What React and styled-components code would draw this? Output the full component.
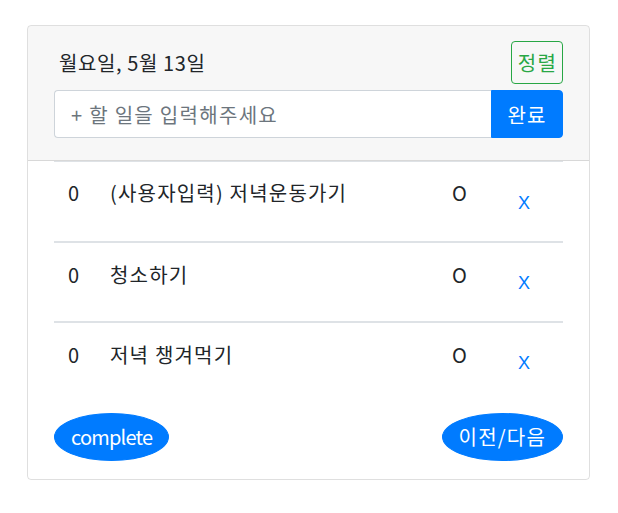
import React from 'react';
import styled, { createGlobalStyle } from 'styled-components';

const GlobalStyle = createGlobalStyle`
  body {
    margin: 0;
    background: #fff;
    font-family: "Noto Sans CJK KR", "Noto Sans", sans-serif;
    color: #212529;
  }
`;

const Page = styled.div`
  padding: 25px 0 0 27px;
`;

const Card = styled.div`
  box-sizing: border-box;
  width: 563px;
  border: 1px solid rgba(0, 0, 0, 0.125);
  border-radius: 4px;
  overflow: hidden;
`;

const Header = styled.div`
  background: rgba(0, 0, 0, 0.03);
  border-bottom: 1px solid rgba(0, 0, 0, 0.125);
  padding: 15px 26px 22px;
`;

const TopRow = styled.div`
  display: flex;
  align-items: center;
  justify-content: space-between;
  height: 43px;
  margin-bottom: 6px;
`;

const DateText = styled.span`
  padding-left: 5px;
  font-size: 20px;
  line-height: 30px;
  letter-spacing: 0.6px;
`;

const SortButton = styled.button`
  box-sizing: border-box;
  height: 43px;
  padding: 0 5px 0 6px;
  background: transparent;
  border: 1px solid #28a745;
  border-radius: 4px;
  color: #28a745;
  font-family: inherit;
  font-size: 20px;
  line-height: 30px;
  letter-spacing: 1.2px;
`;

const InputGroup = styled.div`
  display: flex;
  height: 48px;
`;

const TodoInput = styled.input`
  flex: 1;
  min-width: 0;
  box-sizing: border-box;
  height: 48px;
  padding: 0 16px;
  border: 1px solid #ced4da;
  border-right: none;
  border-radius: 4px 0 0 4px;
  background: #fff;
  font-family: inherit;
  font-size: 20px;
  letter-spacing: 1.3px;
  color: #495057;

  &::placeholder {
    color: #6c757d;
  }
`;

const DoneButton = styled.button`
  box-sizing: border-box;
  width: 72px;
  height: 48px;
  border: 1px solid #007bff;
  border-radius: 0 4px 4px 0;
  background: #007bff;
  color: #fff;
  font-family: inherit;
  font-size: 20px;
  letter-spacing: 1.2px;
`;

const Body = styled.div`
  padding: 0 26px 18px;
`;

const Row = styled.div`
  display: grid;
  grid-template-columns: 56px 342px 66px 1fr;
  box-sizing: border-box;
  height: 80px;
  border-top: 2px solid #dee2e6;
  font-size: 20px;
  line-height: 30px;

  &:first-child {
    border-top-width: 1px;
  }
`;

const Cell = styled.div`
  padding: ${p => (p.$first ? 16 : 17)}px 0 0 ${p => p.$indent || 0}px;
  white-space: nowrap;
  letter-spacing: ${p => (p.$wide ? 1.2 : 0)}px;
`;

const RemoveButton = styled.button`
  align-self: start;
  justify-self: start;
  margin-top: ${p => (p.$first ? 29 : 28)}px;
  padding: 0;
  border: none;
  background: none;
  color: #007bff;
  font-family: "Liberation Sans", Arial, sans-serif;
  font-size: 18px;
  line-height: 24px;
`;

const Footer = styled.div`
  display: flex;
  justify-content: space-between;
  margin-top: 12px;
`;

const PillButton = styled.button`
  box-sizing: border-box;
  height: 48px;
  padding: 8px 16px;
  border: 1px solid #007bff;
  border-radius: 50%;
  background: #007bff;
  color: #fff;
  font-family: inherit;
  font-size: 20px;
  line-height: 30px;
  letter-spacing: ${p => p.$spacing}px;
`;

const todos = [
  { id: 1, count: 0, title: '(사용자입력) 저녁운동가기' },
  { id: 2, count: 0, title: '청소하기' },
  { id: 3, count: 0, title: '저녁 챙겨먹기' },
];

export default function App() {
  return (
    <Page>
      <GlobalStyle />
      <Card>
        <Header>
          <TopRow>
            <DateText>월요일, 5월 13일</DateText>
            <SortButton>정렬</SortButton>
          </TopRow>
          <InputGroup>
            <TodoInput placeholder="+ 할 일을 입력해주세요" />
            <DoneButton>완료</DoneButton>
          </InputGroup>
        </Header>
        <Body>
          {todos.map((todo, i) => (
            <Row key={todo.id}>
              <Cell $first={i === 0} $indent={14}>{todo.count}</Cell>
              <Cell $first={i === 0} $wide>{todo.title}</Cell>
              <Cell $first={i === 0}>O</Cell>
              <RemoveButton $first={i === 0}>X</RemoveButton>
            </Row>
          ))}
          <Footer>
            <PillButton $spacing={-0.8}>complete</PillButton>
            <PillButton $spacing={1.2}>이전/다음</PillButton>
          </Footer>
        </Body>
      </Card>
    </Page>
  );
}
